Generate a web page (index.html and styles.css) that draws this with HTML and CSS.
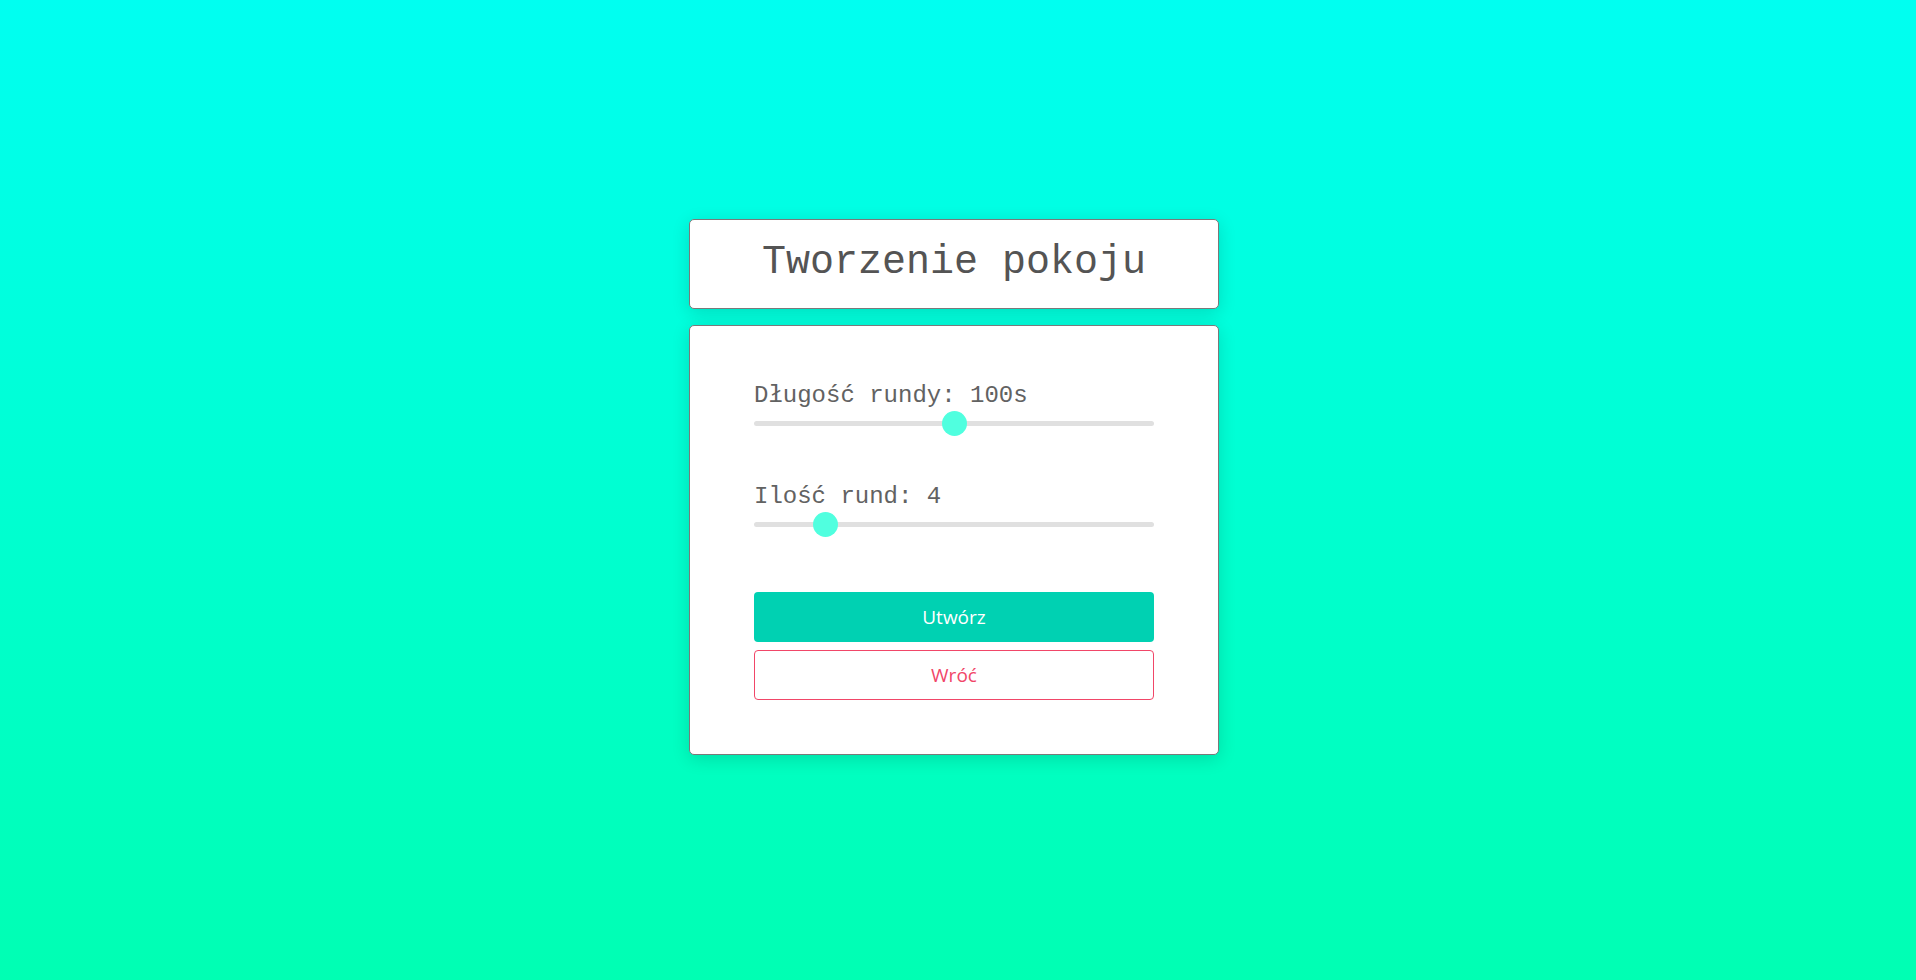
FILE: index.html
```html
<!DOCTYPE html>
<html lang="pl">
<head>
<meta charset="utf-8">
<title>Tworzenie pokoju</title>
<link rel="stylesheet" href="styles.css">
</head>
<body>
  <main class="wrapper">
    <section class="card header">
      <h1 class="title">Tworzenie pokoju</h1>
    </section>
    <section class="card panel">
      <div class="field">
        <label class="field-label" for="len">Długość rundy: 100s</label>
        <input class="slider" id="len" type="range" min="0" max="200" value="100">
      </div>
      <div class="field">
        <label class="field-label" for="rounds">Ilość rund: 4</label>
        <input class="slider" id="rounds" type="range" min="1" max="20" value="4">
      </div>
      <div class="actions">
        <button class="btn btn-primary" type="button">Utwórz</button>
        <button class="btn btn-outline" type="button">Wróć</button>
      </div>
    </section>
  </main>
</body>
</html>
```
FILE: styles.css
```css
html {
  height: 100%;
}

body {
  margin: 0;
  min-height: 100vh;
  box-sizing: border-box;
  padding: 0 8px 6px 0;
  background: linear-gradient(to bottom, #00fff1, #00ffb3);
  display: flex;
  align-items: center;
  justify-content: center;
}

.wrapper {
  width: 530px;
  display: flex;
  flex-direction: column;
  gap: 16px;
}

.card {
  background: #fff;
  border: 1px solid #7a7a7a;
  border-radius: 5px;
  box-shadow: 0 4px 18px rgba(0, 0, 0, 0.14);
}

.header {
  padding: 20px 0 23px;
  text-align: center;
}

.title {
  margin: 0;
  font-family: "Liberation Mono", "Courier New", monospace;
  font-weight: normal;
  font-size: 40px;
  line-height: 45px;
  color: #545454;
}

.panel {
  padding: 56px 64px 54px;
}

.field + .field {
  margin-top: 47px;
}

.field-label {
  display: block;
  font-family: "Liberation Mono", "Courier New", monospace;
  font-size: 24px;
  line-height: 27px;
  color: #626262;
}

.slider {
  display: block;
  -webkit-appearance: none;
  appearance: none;
  width: 100%;
  height: 25px;
  margin: 2px 0 0;
  padding: 0;
  background: transparent;
}

.slider::-webkit-slider-runnable-track {
  height: 5px;
  background: #e0e0e0;
  border-radius: 3px;
}

.slider::-webkit-slider-thumb {
  -webkit-appearance: none;
  appearance: none;
  width: 25px;
  height: 25px;
  border-radius: 50%;
  background: #50ffdf;
  border: none;
  margin-top: -10px;
}

.actions {
  margin-top: 55px;
  display: flex;
  flex-direction: column;
  gap: 8px;
}

.btn {
  display: block;
  width: 100%;
  height: 50px;
  box-sizing: border-box;
  border-radius: 4px;
  font-family: "Open Sans", "Noto Sans", sans-serif;
  font-size: 19px;
  padding: 0;
  cursor: pointer;
}

.btn-primary {
  background: #00d1b2;
  border: 1px solid transparent;
  color: #fff;
}

.btn-outline {
  background: #fff;
  border: 1px solid #f14668;
  color: #f14668;
}
```
